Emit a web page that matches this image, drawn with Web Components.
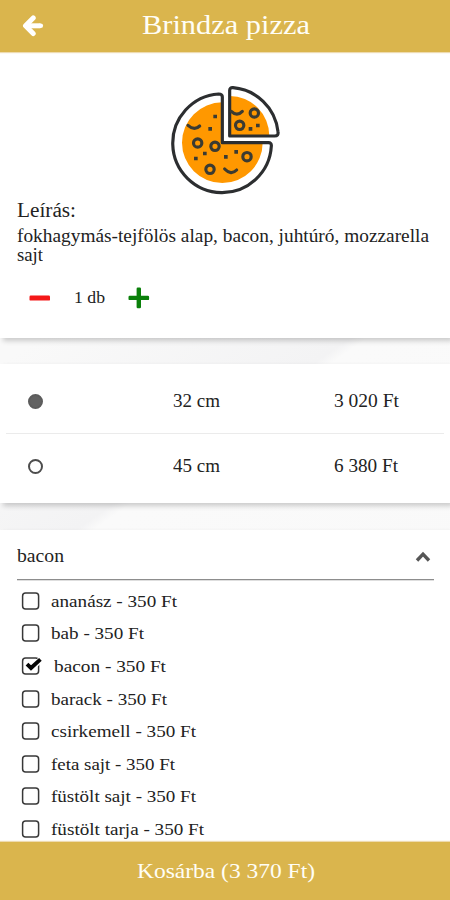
<!DOCTYPE html>
<html lang="hu">
<head>
<meta charset="utf-8">
<title>Brindza pizza</title>
<style>
html, body { margin: 0; height: 100%; overflow: hidden; }
body { font-family: "Liberation Serif", serif; color: #222; background: #f8f8f8; }
</style>
</head>
<body>
<pizza-page></pizza-page>
<script>
const define = (name, html, setup) => {
  const template = document.createElement('template');
  template.innerHTML = html;
  customElements.define(name, class extends HTMLElement {
    connectedCallback() {
      if (this.shadowRoot) return;
      this.attachShadow({ mode: 'open' }).append(template.content.cloneNode(true));
      if (setup) setup(this, this.shadowRoot);
    }
  });
};

// A line of text widened and tracked so that it spans the width given in its "w" attribute.
define('fit-text', `<style>:host{display:inline-block;white-space:nowrap;text-align:left;justify-self:start}span{display:inline-block;transform-origin:0 50%;font-kerning:none;font-variant-ligatures:none}</style><span><slot></slot></span>`, (host, root) => {
  const span = root.querySelector('span');
  const width = Number(host.getAttribute('w'));
  const natural = span.getBoundingClientRect().width;
  const scale = Math.min(1.12, width / natural);
  span.style.letterSpacing = ((width / scale - natural) / host.textContent.length).toFixed(3) + 'px';
  span.style.transform = `scaleX(${scale.toFixed(4)})`;
  host.style.width = width + 'px';
});

define('app-header', `<style>
:host{display:grid;grid-template-columns:66px 1fr 66px;align-items:center;height:52px;background:#dab54d;color:#fffef6;font-size:27.5px;line-height:32px;box-shadow:0 1px 1px #eedbb0;z-index:1;flex:none}
svg{width:22px;height:22px;margin-left:22px;display:block}
div{text-align:center;padding-left:2px;padding-bottom:2px}
</style>
<svg viewBox="0 0 22 22" fill="none" stroke="#fff" stroke-width="5" stroke-linecap="round" stroke-linejoin="round"><path d="M11.2 2.9 3.5 10.8l7.7 7.7"/><path d="M5 10.8h13.4" stroke-linecap="butt"/><path d="M18.2 10.8h.6" stroke-width="4.6"/></svg>
<div><slot></slot></div>`);

define('pizza-icon', `<style>:host{display:block;width:130px;height:125px}svg{display:block}</style>
<svg width="130" height="125" viewBox="0 0 390 375" fill="none" stroke-linecap="round" stroke-linejoin="round">
<path d="M187 82A121 121 0 1 0 308 203H187Z" fill="#ff9800"/>
<path d="M209 63A119 120 0 0 1 328 183H209Z" fill="#ff9800"/>
<g stroke="#2c2e30" stroke-width="9.5">
<path d="M187 203V66Q187 57 176 57A148 148 0 1 0 334 213Q335 203 325 203Z"/>
<path d="M209 183V46Q209 37 219 38C288 44 346 97 354 170Q356 183 344 183Z"/>
</g>
<g stroke="#3b3b32" stroke-width="9.5">
<circle cx="113" cy="204" r="12.5"/><circle cx="165" cy="214" r="12.5"/><circle cx="261" cy="245" r="12.5"/><circle cx="150" cy="283" r="12.5"/><circle cx="239" cy="151" r="12.5"/><circle cx="283" cy="114" r="12.5"/>
<path d="M84 151Q103 168 119 153M194 282Q213 302 230 285M214 109Q231 126 247 109"/>
</g>
<path fill="#3b3b32" d="M160 119h11v11h-11zM145 156h11v11h-11zM129 230h11v11h-11zM102 245h11v11h-11zM192 240h11v11h-11zM223 225h11v11h-11zM266 156h11v11h-11zM288 146h11v11h-11z"/>
</svg>`);

define('content-card', `<style>:host{display:block;background:#fff;box-shadow:3px 3px 5px rgba(0,0,0,.19);box-sizing:border-box;flex:none}</style><slot></slot>`);

define('quantity-stepper', `<style>
:host{display:flex;align-items:center;height:22px;padding-left:12px;font-size:17px;line-height:22px}
svg{width:22px;height:22px;flex:none} .n{width:32px;margin:0 22px 0 23px}
</style>
<svg viewBox="0 0 22 22"><rect x=".5" y="8.6" width="20.5" height="5" rx="1.2" fill="#f41818"/></svg>
<div class="n"><slot></slot></div>
<svg viewBox="0 0 22 22"><path d="M8.6 1.8q0-1.2 1.2-1.2h2q1.2 0 1.2 1.2v6.9h6.9q1.2 0 1.2 1.2v2q0 1.2-1.2 1.2H13v6.9q0 1.2-1.2 1.2h-2q-1.2 0-1.2-1.2v-6.9H1.7Q.5 13.1.5 11.9v-2q0-1.2 1.2-1.2h6.9z" fill="#0a800a"/></svg>`);

define('size-row', `<style>
:host{display:grid;grid-template-columns:173px 161px 1fr;align-items:center;height:64px;font-size:18px;line-height:20px}
i{display:block;box-sizing:border-box;width:15px;height:15px;border-radius:50%;border:2px solid #4d4d4d;margin-left:28px}
:host([selected]) i{background:#626262;border-color:#5c5c5c}
</style><i></i><slot></slot>`);

define('select-header', `<style>
:host{display:flex;justify-content:space-between;align-items:center;height:49px;border-bottom:1px solid #8d8d8d;box-shadow:0 1px 0 #dedede;margin:0 16px 0 17px;font-size:18px;line-height:20px}
svg{width:16px;height:12px;margin:5px 3px 0 0} div{padding-top:3px}
</style><div><slot></slot></div>
<svg viewBox="0 0 16 12" fill="none" stroke="#565656" stroke-width="3.4"><path d="M2 9.5 8 3.2l6 6.3"/></svg>`);

define('topping-option', `<style>
:host{display:flex;align-items:center;height:32.6px;font-size:17.5px;line-height:20px;padding-left:21px}
svg{width:22px;height:20px;flex:none;margin-right:8px;display:block} path{display:none}
:host([checked]) path{display:block} :host([checked]) svg{margin-right:11px}
</style>
<svg viewBox="0 0 22 20" fill="none"><rect x="1.6" y="2" width="16" height="16" rx="3" stroke="#383838" stroke-width="1.5"/><path d="M6 8.8 10 12.6 19.6 3.6" stroke="#fff" stroke-width="6"/><path d="M6 8.2 10 12 19.4 3.4" stroke="#050505" stroke-width="3.9"/></svg><slot></slot>`);

define('cart-button', `<style>:host{display:flex;align-items:center;justify-content:center;height:58px;box-sizing:border-box;padding-left:1px;background:#dab54d;color:#fffef6;font-size:22px;line-height:26px;flex:none;box-shadow:0 -1px 1px #eedbb0;z-index:1}</style><slot></slot>`);

define('pizza-page', `<style>
:host{display:flex;flex-direction:column;width:450px;height:900px;overflow:hidden;background:linear-gradient(145deg,#f9f9f9 30%,#f3f3f4 48%,#fafafa 49%,#f8f8f8)}
.info{height:286px;padding:23px 17px 0;margin-bottom:26px}
pizza-icon{margin-left:143px}
h2{font-size:20px;line-height:22px;font-weight:400;margin:-1px 0 6px}
p{font-size:18px;line-height:19px;margin:0 0 22px} p fit-text{display:block}
.sizes{height:139px;padding-top:5px;margin-bottom:27px}
hr{border:0;height:1px;background:#ebebeb;margin:0 6px}
.toppings{flex:1 1 0;min-height:0;overflow:hidden}
.list{padding-top:4.5px}
</style>
<app-header><fit-text w="168">Brindza pizza</fit-text></app-header>
<content-card class="info"><pizza-icon></pizza-icon>
<h2><fit-text w="59">Leírás:</fit-text></h2>
<p><fit-text w="412">fokhagymás-tejfölös alap, bacon, juhtúró, mozzarella</fit-text><fit-text w="26">sajt</fit-text></p>
<quantity-stepper><fit-text w="31">1 db</fit-text></quantity-stepper></content-card>
<content-card class="sizes">
<size-row selected><fit-text w="47">32 cm</fit-text><fit-text w="65">3 020 Ft</fit-text></size-row><hr>
<size-row><fit-text w="47">45 cm</fit-text><fit-text w="64">6 380 Ft</fit-text></size-row></content-card>
<content-card class="toppings"><select-header><fit-text w="47">bacon</fit-text></select-header>
<div class="list">
<topping-option><fit-text w="126">ananász - 350 Ft</fit-text></topping-option>
<topping-option><fit-text w="93">bab - 350 Ft</fit-text></topping-option>
<topping-option checked><fit-text w="112">bacon - 350 Ft</fit-text></topping-option>
<topping-option><fit-text w="116">barack - 350 Ft</fit-text></topping-option>
<topping-option><fit-text w="145">csirkemell - 350 Ft</fit-text></topping-option>
<topping-option><fit-text w="124">feta sajt - 350 Ft</fit-text></topping-option>
<topping-option><fit-text w="145">füstölt sajt - 350 Ft</fit-text></topping-option>
<topping-option><fit-text w="153">füstölt tarja - 350 Ft</fit-text></topping-option>
</div></content-card>
<cart-button><fit-text w="178">Kosárba (3 370 Ft)</fit-text></cart-button>`);
</script>
</body>
</html>
